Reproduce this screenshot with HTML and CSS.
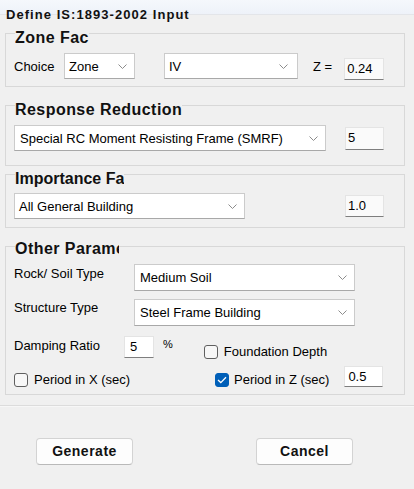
FILE: index.html
```html
<!DOCTYPE html>
<html>
<head>
<meta charset="utf-8">
<link rel="stylesheet" href="styles.css">
</head>
<body>
<div class="header"><span class="title">Define IS:1893-2002 Input</span></div>

<div class="group g1">
  <div class="gtitle">Zone Fac</div>
  <div class="row r-g1">
    <span class="lbl-choice">Choice</span>
    <div class="select s-zone"><span>Zone</span><svg class="chev" width="9" height="5" viewBox="0 0 9 5"><polyline points="0.5,0.5 4.5,4.5 8.5,0.5" fill="none" stroke="#8c8c8c" stroke-width="1"/></svg></div>
    <div class="select s-iv"><span>IV</span><svg class="chev" width="9" height="5" viewBox="0 0 9 5"><polyline points="0.5,0.5 4.5,4.5 8.5,0.5" fill="none" stroke="#8c8c8c" stroke-width="1"/></svg></div>
    <span class="zeq">Z =</span>
    <div class="tb tb-z">0.24</div>
  </div>
</div>

<div class="group g2">
  <div class="gtitle">Response Reduction</div>
  <div class="row r-g2">
    <div class="select s-smrf"><span>Special RC Moment Resisting Frame (SMRF)</span><svg class="chev" width="9" height="5" viewBox="0 0 9 5"><polyline points="0.5,0.5 4.5,4.5 8.5,0.5" fill="none" stroke="#8c8c8c" stroke-width="1"/></svg></div>
    <div class="tb tb-r">5</div>
  </div>
</div>

<div class="group g3">
  <div class="gtitle clip-imp">Importance Factor</div>
  <div class="row r-g3">
    <div class="select s-imp"><span>All General Building</span><svg class="chev" width="9" height="5" viewBox="0 0 9 5"><polyline points="0.5,0.5 4.5,4.5 8.5,0.5" fill="none" stroke="#8c8c8c" stroke-width="1"/></svg></div>
    <div class="tb tb-i">1.0</div>
  </div>
</div>

<div class="group g4">
  <div class="gtitle clip-oth">Other Parameters</div>
  <div class="row4 r1">
    <span class="lbl4 l1">Rock/ Soil Type</span>
    <div class="select s-wide"><span>Medium Soil</span><svg class="chev" width="9" height="5" viewBox="0 0 9 5"><polyline points="0.5,0.5 4.5,4.5 8.5,0.5" fill="none" stroke="#8c8c8c" stroke-width="1"/></svg></div>
  </div>
  <div class="row4 r2">
    <span class="lbl4 l2">Structure Type</span>
    <div class="select s-wide"><span>Steel Frame Building</span><svg class="chev" width="9" height="5" viewBox="0 0 9 5"><polyline points="0.5,0.5 4.5,4.5 8.5,0.5" fill="none" stroke="#8c8c8c" stroke-width="1"/></svg></div>
  </div>
  <div class="row4 r3">
    <span class="lbl-damp">Damping Ratio</span>
    <div class="tb tb-damp">5</div>
    <span class="pct">%</span>
    <label class="cb cb-found"><span class="box"></span><span>Foundation Depth</span></label>
  </div>
  <div class="row4 r4">
    <label class="cb cb-x"><span class="box"></span><span>Period in X (sec)</span></label>
    <label class="cb cb-z"><span class="box checked"><svg width="10" height="8" viewBox="0 0 10 8"><polyline points="1,4 3.8,6.6 9,1.2" fill="none" stroke="#fff" stroke-width="1.3"/></svg></span><span>Period in Z (sec)</span></label>
    <div class="tb tb-p">0.5</div>
  </div>
</div>

<div class="sep"></div>

<div class="buttons">
  <div class="btn btn-gen">Generate</div>
  <div class="btn btn-can">Cancel</div>
</div>
</body>
</html>
```

FILE: styles.css
```css
html, body {
  margin: 0;
  padding: 0;
}
body {
  background: #f0f0f0;
  font-family: "Liberation Sans", Arial, sans-serif;
  font-size: 13px;
  line-height: 15px;
  color: #000;
  width: 414px;
  height: 489px;
  overflow: hidden;
}
.header {
  box-sizing: border-box;
  height: 22px;
  padding: 7px 0 0 6px;
  background: linear-gradient(to bottom, #f5f8fc 0, #eef2f9 14px, #e3e5e9 14px, #e3e5e9 15px, #f0f0f0 15px);
}
.title {
  font-weight: bold;
  font-size: 13px;
  line-height: 15px;
  letter-spacing: 1.05px;
  color: #111;
}
.group {
  box-sizing: border-box;
  margin-left: 5px;
  width: 400px;
  border: 1px solid #d8d8d8;
  padding: 0 8px;
}
.gtitle {
  width: fit-content;
  margin: -4px 0 0 1px;
  background: #f0f0f0;
  font-weight: bold;
  font-size: 16px;
  line-height: 16px;
  letter-spacing: 0.45px;
  white-space: nowrap;
  overflow: hidden;
  color: #111;
}
.clip-imp { width: 109px; letter-spacing: 0; }
.clip-oth { width: 104px; margin-top: -6px; }

.g1 { margin-top: 11px; padding-bottom: 7px; }
.g2 { margin-top: 18px; padding-bottom: 14px; }
.g3 { margin-top: 8px; padding-bottom: 8px; }
.g4 { margin-top: 18px; padding-bottom: 7px; }

.row {
  display: flex;
  align-items: center;
  height: 26px;
}
.r-g1 { margin-top: 7px; }
.r-g2 { margin-top: 7px; }
.r-g3 { margin-top: 6px; }

.lbl-choice { width: 50px; }

.select {
  box-sizing: border-box;
  height: 26px;
  background: #fff;
  border: 1px solid #cbcbcb;
  border-bottom-color: #a8a8a8;
  display: flex;
  align-items: center;
  justify-content: space-between;
  padding: 0 7px 0 4px;
  white-space: nowrap;
}
.chev { flex: none; }
.s-zone { width: 71px; }
.s-iv { width: 134px; margin-left: 29px; padding-right: 9px; }
.s-smrf { width: 312px; padding-left: 5px; }
.s-imp { width: 231px; }
.s-wide { width: 221px; height: 27px; padding-left: 5px; }

.zeq { margin-left: 15px; }

.tb {
  box-sizing: border-box;
  height: 22px;
  background: #fafafa;
  border: 1px solid #e4e4e4;
  border-bottom-color: #7e7e7e;
  padding-left: 2px;
  line-height: 20px;
}
.tb-z { width: 40px; margin-left: 12px; align-self: flex-end; margin-bottom: -1px; }
.tb-r { width: 39px; margin-left: 19px; height: 23px; }
.tb-i { width: 39px; margin-left: 100px; }

.row4 {
  display: flex;
  align-items: flex-start;
}
.r1 { margin-top: 7px; height: 27px; }
.r2 { margin-top: 8px; height: 27px; }
.r3 { margin-top: 10px; height: 23px; }
.r4 { margin-top: 7px; height: 21px; align-items: flex-end; }

.lbl4 { width: 120px; }
.l1 { margin-top: 2px; }
.l2 { margin-top: 1px; }
.lbl-damp { width: 110px; margin-top: 2px; }
.tb-damp {
  width: 30px;
  background: #fff;
  padding-left: 5px;
}
.pct {
  font-size: 11px;
  margin-left: 9px;
  margin-top: 1px;
}
.cb {
  display: flex;
  align-items: center;
  gap: 6px;
  white-space: nowrap;
}
.box {
  box-sizing: border-box;
  width: 14px;
  height: 14px;
  border: 1px solid #5f5f5f;
  border-radius: 3px;
  background: #f7f7f7;
  display: flex;
  align-items: center;
  justify-content: center;
}
.box.checked {
  background: #005fb8;
  border-color: #005fb8;
}
.cb-found { margin-left: 31px; margin-top: 8px; }
.cb-x { width: 201px; }
.cb-z { gap: 5px; }
.tb-p {
  width: 39px;
  height: 21px;
  background: #fff;
  margin-left: 15px;
  line-height: 19px;
  padding-left: 3px;
}

.sep {
  margin-top: 10px;
  height: 1px;
  background: #dcdcdc;
  border-bottom: 1px solid #f7f7f7;
}
.buttons {
  display: flex;
  margin-top: 31px;
}
.btn {
  box-sizing: border-box;
  width: 97px;
  height: 27px;
  background: #fdfdfd;
  border: 1px solid #d3d3d3;
  border-bottom-color: #b9b9b9;
  border-radius: 4px;
  display: flex;
  align-items: center;
  justify-content: center;
  font-weight: bold;
  font-size: 14px;
  letter-spacing: 0.5px;
  color: #111;
}
.btn-gen { margin-left: 36px; }
.btn-can { margin-left: 123px; }
```
